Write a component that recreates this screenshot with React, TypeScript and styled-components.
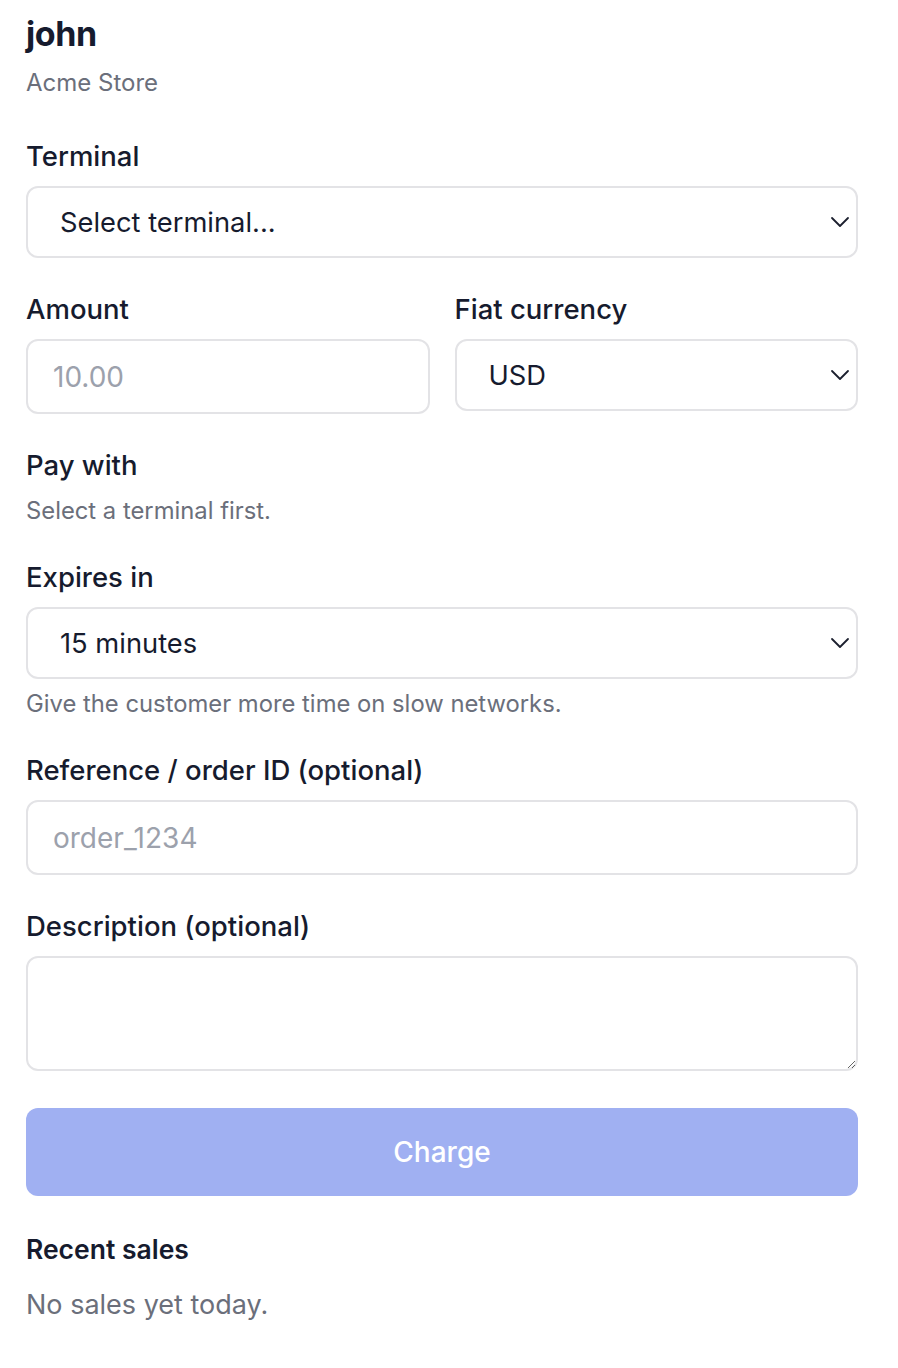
import styled, { createGlobalStyle } from "styled-components";

const GlobalStyle = createGlobalStyle`
  html, body {
    margin: 0;
    padding: 0;
    background: #ffffff;
  }
  body {
    font-family: Inter, "Noto Sans", "Liberation Sans", sans-serif;
    color: #161b2e;
  }
  * {
    box-sizing: border-box;
  }
`;

const Page = styled.main`
  display: flex;
  flex-direction: column;
  width: 832px;
  margin-left: 26px;
  padding: 12px 0 40px 0;
`;

const Header = styled.header`
  display: flex;
  flex-direction: column;
  gap: 11px;
  margin-bottom: 39px;
`;

const UserName = styled.h1`
  margin: 0;
  font-size: 34px;
  line-height: 44px;
  font-weight: 700;
  letter-spacing: -0.4px;
  color: #161b2e;
`;

const StoreName = styled.div`
  font-size: 24px;
  line-height: 32px;
  color: #6b6f7b;
`;

const Form = styled.form`
  display: flex;
  flex-direction: column;
  gap: 33px;
`;

const Row = styled.div`
  display: grid;
  grid-template-columns: 1fr 1fr;
  gap: 25px;
`;

const Field = styled.div`
  display: flex;
  flex-direction: column;
`;

const Label = styled.label`
  font-size: 27.5px;
  line-height: 36px;
  font-weight: 500;
  margin-bottom: 12px;
  color: #161b2e;
`;

const Hint = styled.p<{ $spaced?: boolean }>`
  margin: ${(p) => (p.$spaced ? "10px" : "1px")} 0 0 0;
  font-size: 23.8px;
  line-height: 30px;
  color: #6b6f7b;
`;

const SelectWrap = styled.div`
  position: relative;
  display: flex;
`;

const Select = styled.select`
  appearance: none;
  width: 100%;
  height: 72px;
  padding: 0 60px 0 32px;
  border: 2px solid #e3e3e6;
  border-radius: 12px;
  background: #ffffff;
  font-family: inherit;
  font-size: 27.3px;
  color: #161b2e;
  outline: none;
`;

const Chevron = styled.svg`
  position: absolute;
  right: 8px;
  top: 50%;
  transform: translateY(-50%);
  pointer-events: none;
`;

const Input = styled.input`
  width: 100%;
  height: 75px;
  padding: 0 25px;
  border: 2px solid #e3e3e6;
  border-radius: 12px;
  background: #ffffff;
  font-family: inherit;
  font-size: 28px;
  color: #161b2e;
  outline: none;
  &::placeholder {
    color: #9ca1ac;
  }
`;

const TextArea = styled.textarea`
  width: 100%;
  height: 115px;
  padding: 18px 25px;
  border: 2px solid #e3e3e6;
  border-radius: 12px;
  background: #ffffff;
  font-family: inherit;
  font-size: 28px;
  color: #161b2e;
  outline: none;
`;

const ChargeButton = styled.button`
  height: 88px;
  margin-top: 4px;
  border: none;
  border-radius: 12px;
  background: #a0b0f2;
  color: #ffffff;
  font-family: inherit;
  font-size: 28px;
  font-weight: 500;
  cursor: not-allowed;
`;

const Sales = styled.section`
  display: flex;
  flex-direction: column;
  gap: 20px;
  margin-top: 35px;
`;

const SectionTitle = styled.h2`
  margin: 0;
  font-size: 26.5px;
  line-height: 36px;
  font-weight: 600;
  color: #161b2e;
`;

const Empty = styled.p`
  margin: 0;
  font-size: 27px;
  line-height: 36px;
  color: #6b6f7b;
`;

function SelectBox({ options }: { options: string[] }) {
  return (
    <SelectWrap>
      <Select defaultValue={options[0]}>
        {options.map((o) => (
          <option key={o}>{o}</option>
        ))}
      </Select>
      <Chevron width="20" height="12" viewBox="0 0 20 12" fill="none">
        <path
          d="M2 2l8 8 8-8"
          stroke="#1b1f2e"
          strokeWidth="1.8"
          strokeLinecap="round"
          strokeLinejoin="round"
        />
      </Chevron>
    </SelectWrap>
  );
}

export default function App() {
  return (
    <>
      <GlobalStyle />
      <Page>
        <Header>
          <UserName>john</UserName>
          <StoreName>Acme Store</StoreName>
        </Header>
        <Form onSubmit={(e) => e.preventDefault()}>
          <Field>
            <Label>Terminal</Label>
            <SelectBox options={["Select terminal..."]} />
          </Field>
          <Row>
            <Field>
              <Label>Amount</Label>
              <Input placeholder="10.00" inputMode="decimal" />
            </Field>
            <Field>
              <Label>Fiat currency</Label>
              <SelectBox options={["USD", "EUR", "GBP"]} />
            </Field>
          </Row>
          <Field>
            <Label>Pay with</Label>
            <Hint>Select a terminal first.</Hint>
          </Field>
          <Field>
            <Label>Expires in</Label>
            <SelectBox options={["15 minutes", "30 minutes", "60 minutes"]} />
            <Hint $spaced>Give the customer more time on slow networks.</Hint>
          </Field>
          <Field>
            <Label>Reference / order ID (optional)</Label>
            <Input placeholder="order_1234" />
          </Field>
          <Field>
            <Label>Description (optional)</Label>
            <TextArea />
          </Field>
          <ChargeButton type="submit" disabled>
            Charge
          </ChargeButton>
        </Form>
        <Sales>
          <SectionTitle>Recent sales</SectionTitle>
          <Empty>No sales yet today.</Empty>
        </Sales>
      </Page>
    </>
  );
}
